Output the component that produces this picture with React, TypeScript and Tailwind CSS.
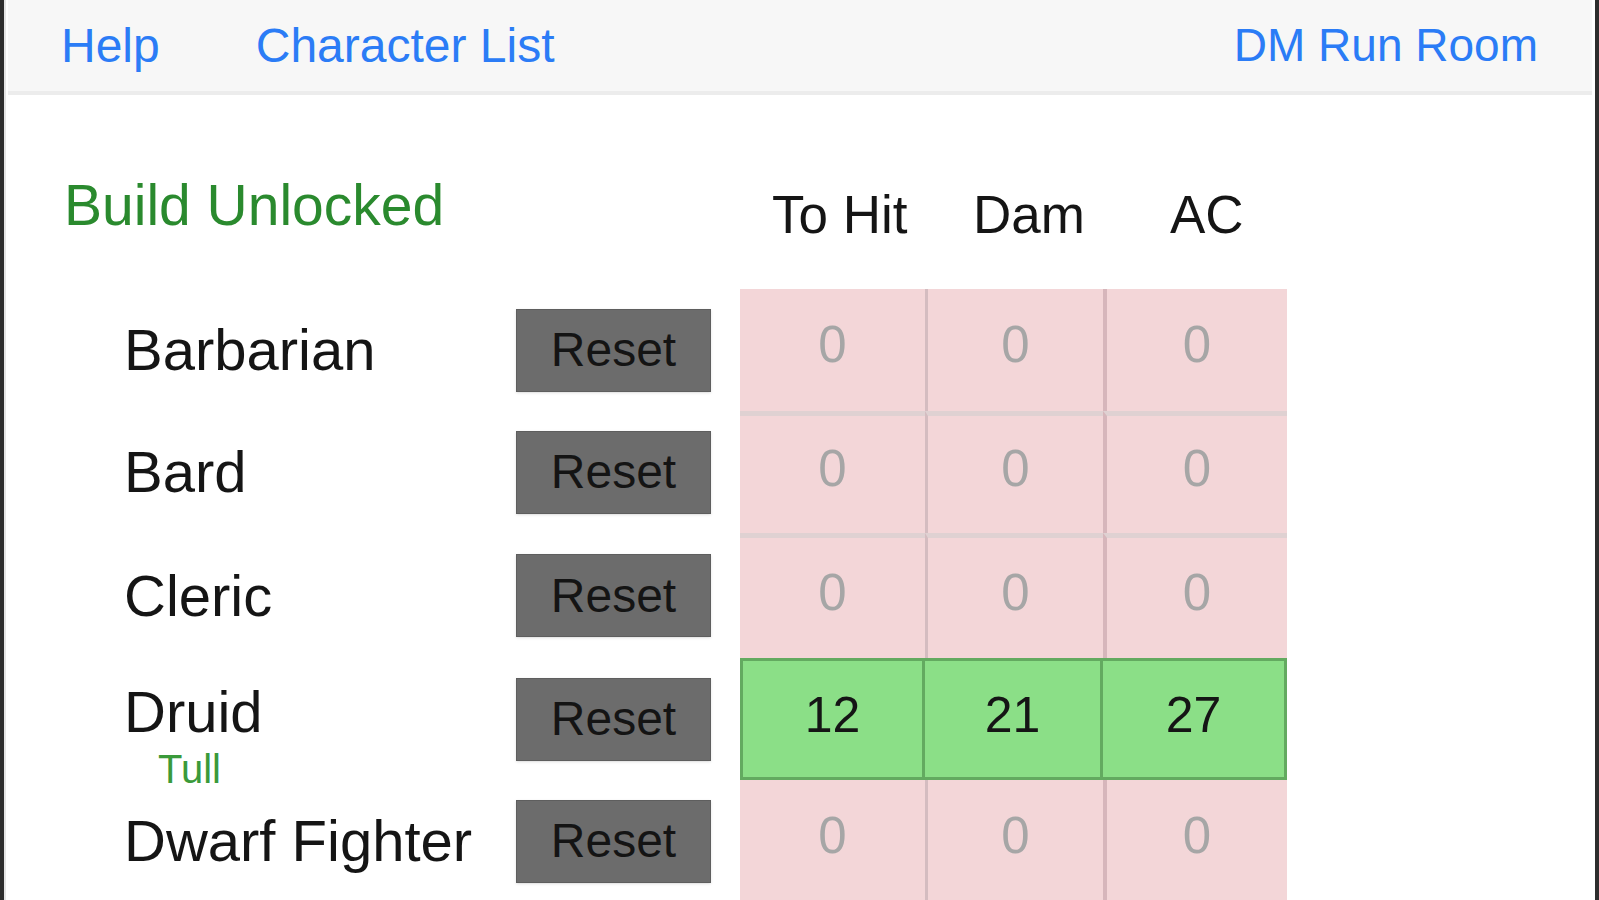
import React from 'react'

interface Row {
  name: string
  sub?: string
  stats: number[]
  active?: boolean
  h: string
}

const rows: Row[] = [
  { name: 'Barbarian', stats: [0, 0, 0], h: 'h-[122px]' },
  { name: 'Bard', stats: [0, 0, 0], h: 'h-[122px]' },
  { name: 'Cleric', stats: [0, 0, 0], h: 'h-[125px]' },
  { name: 'Druid', sub: 'Tull', stats: [12, 21, 27], active: true, h: 'h-[122px]' },
  { name: 'Dwarf Fighter', stats: [0, 0, 0], h: 'h-[122px]' },
]

const colWidths = ['w-[185px]', 'w-[178px]', 'w-[184px]']

function StatCell({ value, col, active, first }: { value: number; col: number; active?: boolean; first: boolean }) {
  if (active) {
    return (
      <div
        className={`${colWidths[col]} h-full flex items-center justify-center pb-[8px] bg-[#8bdf87] border-[3px] border-[#63aa60] ${col > 0 ? 'border-l-0' : ''} text-[50px] text-[#151515]`}
      >
        {value}
      </div>
    )
  }
  return (
    <div
      className={`${colWidths[col]} h-full flex items-center justify-center pb-[10px] bg-[#f3d6d8] text-[51px] text-[#a6a6a6] ${col === 1 ? 'border-l-[3px] border-[#d4bcc0]' : ''} ${col === 2 ? 'border-l-[4px] border-[#d6b6bb]' : ''} ${first ? '' : 'border-t-[5px] border-t-[#dfd1d2]'}`}
    >
      {value}
    </div>
  )
}

export default function App() {
  return (
    <div
      className="w-[1599px] h-[900px] overflow-hidden bg-white border-l-[4px] border-r-[4px] border-[#2d2d2d]"
      style={{ fontFamily: '"Liberation Sans", Arial, sans-serif' }}
    >
      <div className="h-full border-l-[2px] border-[#e4e4e4]">
        {/* Nav bar */}
        <div className="ml-[2px] mr-[3px] h-[95px] bg-[#f7f7f7] border-b-[4px] border-[#ececec] flex items-center pl-[53px] pr-[54px] text-[48px] text-[#2b7cf6]">
          <span>Help</span>
          <span className="ml-[96px]">Character List</span>
          <span className="ml-auto text-[46px]">DM Run Room</span>
        </div>

        {/* Title + column headers */}
        <div className="flex h-[194px]">
          <div className="w-[734px] pl-[58px] pt-[82px] text-[57px] leading-none text-[#2a8a2e]">
            Build Unlocked
          </div>
          <div className="flex text-[53px] leading-none text-[#151515] pt-[93px]">
            <div className={`${colWidths[0]} pl-[32px]`}>To Hit</div>
            <div className={`${colWidths[1]} pl-[48px]`}>Dam</div>
            <div className={`${colWidths[2]} pl-[67px]`}>AC</div>
          </div>
        </div>

        {/* Rows */}
        {rows.map((row, i) => (
          <div key={row.name} className={`flex items-center ${row.h}`}>
            <div className="w-[510px] pl-[118px] relative">
              <div className={`text-[58px] leading-none text-[#151515] ${row.active ? '-mt-[14px]' : ''}`}>
                {row.name}
              </div>
              {row.sub && (
                <div className="absolute left-[152px] top-[52px] text-[40px] leading-none text-[#3a9a3a]">
                  {row.sub}
                </div>
              )}
            </div>
            <button className="w-[195px] h-[83px] bg-[#6c6c6c] border border-[#5e5e5e] shadow-sm flex items-center justify-center text-[48px] text-[#141414]">
              Reset
            </button>
            <div className="ml-[29px] flex h-full">
              {row.stats.map((v, c) => (
                <StatCell
                  key={c}
                  value={v}
                  col={c}
                  active={row.active}
                  first={i === 0 || rows[i - 1].active === true}
                />
              ))}
            </div>
          </div>
        ))}
      </div>
    </div>
  )
}
